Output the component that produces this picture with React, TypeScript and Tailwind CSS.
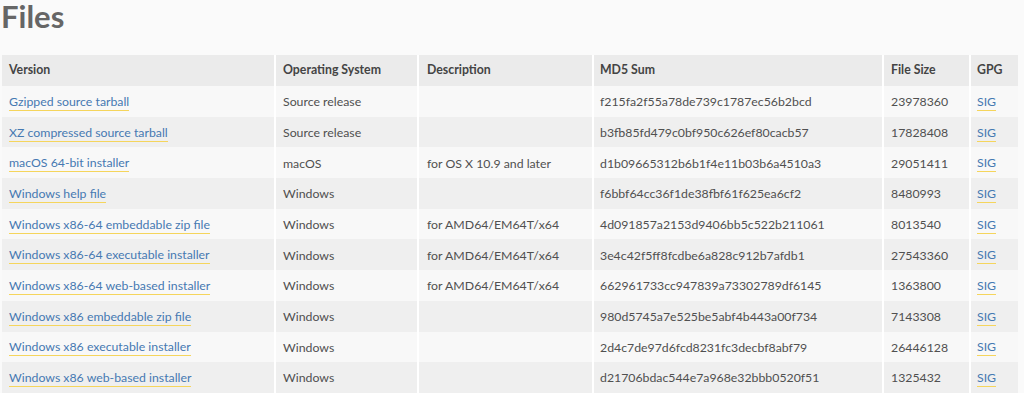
import React from "react";

type Row = { name: string; os: string; desc: string; md5: string; size: string };

const rows: Row[] = [
  { name: "Gzipped source tarball", os: "Source release", desc: "", md5: "f215fa2f55a78de739c1787ec56b2bcd", size: "23978360" },
  { name: "XZ compressed source tarball", os: "Source release", desc: "", md5: "b3fb85fd479c0bf950c626ef80cacb57", size: "17828408" },
  { name: "macOS 64-bit installer", os: "macOS", desc: "for OS X 10.9 and later", md5: "d1b09665312b6b1f4e11b03b6a4510a3", size: "29051411" },
  { name: "Windows help file", os: "Windows", desc: "", md5: "f6bbf64cc36f1de38fbf61f625ea6cf2", size: "8480993" },
  { name: "Windows x86-64 embeddable zip file", os: "Windows", desc: "for AMD64/EM64T/x64", md5: "4d091857a2153d9406bb5c522b211061", size: "8013540" },
  { name: "Windows x86-64 executable installer", os: "Windows", desc: "for AMD64/EM64T/x64", md5: "3e4c42f5ff8fcdbe6a828c912b7afdb1", size: "27543360" },
  { name: "Windows x86-64 web-based installer", os: "Windows", desc: "for AMD64/EM64T/x64", md5: "662961733cc947839a73302789df6145", size: "1363800" },
  { name: "Windows x86 embeddable zip file", os: "Windows", desc: "", md5: "980d5745a7e525be5abf4b443a00f734", size: "7143308" },
  { name: "Windows x86 executable installer", os: "Windows", desc: "", md5: "2d4c7de97d6fcd8231fc3decbf8abf79", size: "26446128" },
  { name: "Windows x86 web-based installer", os: "Windows", desc: "", md5: "d21706bdac544e7a968e32bbb0520f51", size: "1325432" },
];

const font = { fontFamily: "Lato, 'Open Sans', sans-serif" };

const pad = [
  "pl-[7px] border-r-2 border-white",
  "pl-[7px] border-r-2 border-white",
  "pl-[8px] border-r-2 border-white",
  "pl-[6px] border-r-2 border-white",
  "pl-[7px] border-r-2 border-white",
  "pl-[6px]",
];

function Link({ children }: { children: React.ReactNode }) {
  return (
    <span className="text-[#4679b2] border-b border-[#f5d55c] leading-[16px]">{children}</span>
  );
}

export default function App() {
  return (
    <div className="w-[1024px] h-[393px] overflow-hidden bg-[#fafafa]" style={font}>
      <h2 className="pl-[1px] pt-[1px] text-[31px] leading-[30px] font-bold text-[#666666] h-[55px]">Files</h2>
      <div className="ml-[2px] w-[1016px] grid grid-cols-[274px_143px_175px_290px_87px_47px] text-[12.3px] text-[#505050]">
        {["Version", "Operating System", "Description", "MD5 Sum", "File Size", "GPG"].map((h, i) => (
          <div
            key={h}
            className={`h-[31px] flex items-center bg-[#ebebeb] font-bold text-[#444] ${pad[i]}`}
          >
            {h}
          </div>
        ))}
        {rows.map((r, ri) => {
          const bg = ri % 2 === 0 ? "bg-[#f8f8f8]" : "bg-[#efefef]";
          const cells: React.ReactNode[] = [
            <Link>{r.name}</Link>,
            r.os,
            r.desc,
            r.md5,
            r.size,
            <Link>SIG</Link>,
          ];
          return cells.map((c, i) => (
            <div
              key={`${ri}-${i}`}
              className={`h-[30.7px] pt-[2px] flex items-center ${bg} ${pad[i]}`}
            >
              {c}
            </div>
          ));
        })}
      </div>
    </div>
  );
}
